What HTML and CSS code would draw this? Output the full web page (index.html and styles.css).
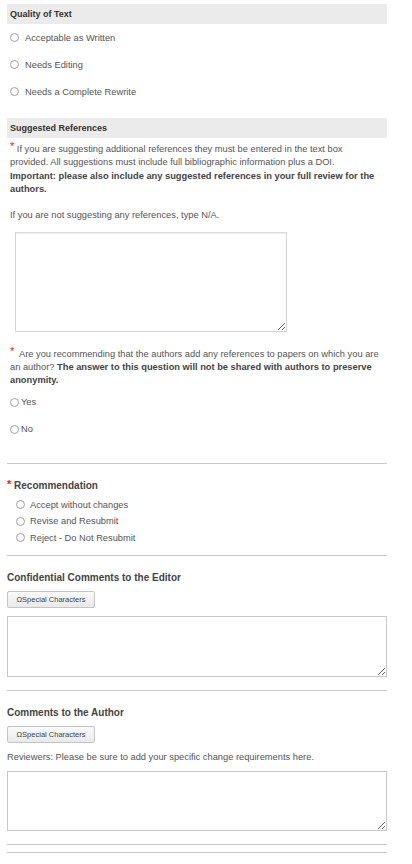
FILE: index.html
```html
<!DOCTYPE html>
<html lang="en">
<head>
  <meta charset="UTF-8">
  <meta name="viewport" content="width=device-width, initial-scale=1.0">
  <title>Review Form</title>
  <link rel="stylesheet" href="styles.css">
</head>
<body>
  <div class="review">
    <!-- quality -->
    <div class="band-title">Quality of Text</div>
    <ul class="choices choices-wide">
      <li><input type="radio" class="radio" name="quality"><label>Acceptable as Written</label></li>
      <li><input type="radio" class="radio" name="quality"><label>Needs Editing</label></li>
      <li><input type="radio" class="radio" name="quality"><label>Needs a Complete Rewrite</label></li>
    </ul>

    <!-- references -->
    <div class="band-title refs-title">Suggested References</div>
    <p class="note first-note"><span class="req">*</span> If you are suggesting additional references they must be entered in the text box<br>
      provided. All suggestions must include full bibliographic information plus a DOI.<br>
      <strong>Important: please also include any suggested references in your full review for the authors.</strong><br><br>
      If you are not suggesting any references, type N/A.</p>
    <textarea class="refs-box"></textarea>

    <p class="note author-note"><span class="req">*</span>&nbsp; Are you recommending that the authors add any references to papers on which you are an author? <strong>The answer to this question will not be shared with authors to preserve anonymity.</strong></p>
    <ul class="choices choices-tight">
      <li><input type="radio" class="radio" name="own"><label>Yes</label></li>
      <li><input type="radio" class="radio" name="own"><label>No</label></li>
    </ul>

    <hr class="rule rule-first">

    <!-- recommendation -->
    <div class="field-title"><span class="req">*</span> Recommendation</div>
    <ul class="choices choices-small">
      <li><input type="radio" class="radio" name="rec"><label>Accept without changes</label></li>
      <li><input type="radio" class="radio" name="rec"><label>Revise and Resubmit</label></li>
      <li><input type="radio" class="radio" name="rec"><label>Reject - Do Not Resubmit</label></li>
    </ul>

    <hr class="rule rule-rec">

    <!-- comments to editor -->
    <div class="field-title">Confidential Comments to the Editor</div>
    <button class="special-btn">&Omega;Special Characters</button>
    <textarea class="comment-box"></textarea>

    <hr class="rule">

    <!-- comments to author -->
    <div class="field-title">Comments to the Author</div>
    <button class="special-btn">&Omega;Special Characters</button>
    <p class="hint">Reviewers: Please be sure to add your specific change requirements here.</p>
    <textarea class="comment-box"></textarea>

    <hr class="rule">
    <hr class="rule rule-last">
  </div>
</body>
</html>
```

FILE: styles.css
```css
body {
  margin: 0;
  font-family: "Liberation Sans", Arial, sans-serif;
  font-size: 9.3px;
  color: #555;
  background-color: #fff;
}

.review {
  width: 380px;
  margin-left: 7px;
  padding-top: 4px;
}

.band-title {
  background-color: #ebebeb;
  height: 20px;
  line-height: 20px;
  padding-left: 3px;
  font-size: 9px;
  font-weight: bold;
  color: #333;
}

.refs-title {
  margin-top: 13px;
}

.choices {
  list-style: none;
  margin: 0;
  padding: 0;
}

.choices li {
  display: flex;
  align-items: center;
}

.radio {
  appearance: none;
  -webkit-appearance: none;
  box-sizing: border-box;
  width: 9px;
  height: 9px;
  margin: 0;
  border: 1px solid #a0a0a0;
  border-radius: 50%;
  background-color: #fff;
}

.choices-wide {
  padding-left: 3px;
}

.choices-wide li {
  height: 27px;
  gap: 6px;
}

.choices-tight {
  padding-left: 3px;
  margin-top: 1px;
}

.choices-tight li {
  height: 27px;
  gap: 2px;
}

.choices-small {
  padding-left: 9px;
  margin-top: 5px;
}

.choices-small li {
  height: 16.5px;
  gap: 5px;
}

.note {
  margin: 0;
  padding-left: 3px;
  line-height: 13.3px;
}

.note strong {
  color: #444;
}

.first-note {
  margin-top: 3px;
}

.req {
  color: #e02020;
  font-size: 11px;
  vertical-align: 2px;
  line-height: 10px;
}

.refs-box {
  display: block;
  box-sizing: border-box;
  width: 272px;
  height: 100px;
  margin: 9px 0 0 8px;
  border: 1px solid #d4d4d4;
  border-top-color: #dcdcdc;
  box-shadow: inset 0 1px 1px #eee;
  padding: 2px;
}

.author-note {
  margin-top: 14px;
}

.rule {
  border: none;
  border-top: 1px solid #c8c8c8;
  margin: 13px 0 0;
  height: 0;
}

.rule-first {
  margin-top: 20px;
}

.rule-rec {
  margin-top: 9px;
}

.rule-last {
  margin-top: 7px;
}

.field-title {
  font-size: 10px;
  font-weight: bold;
  color: #444;
  margin-top: 15px;
  line-height: 13px;
}

.field-title .req {
  vertical-align: 1px;
}

.special-btn {
  display: block;
  box-sizing: border-box;
  width: 88px;
  height: 17px;
  margin-top: 7px;
  padding: 0;
  font-family: "Liberation Sans", Arial, sans-serif;
  font-size: 7.5px;
  color: #444;
  background: linear-gradient(#fafafa, #e9e9e9);
  border: 1px solid #c4c4c4;
  border-radius: 2px;
  cursor: pointer;
}

.comment-box {
  display: block;
  box-sizing: border-box;
  width: 380px;
  height: 61px;
  margin-top: 8px;
  border: 1px solid #c8c8c8;
  padding: 2px;
}

.hint {
  margin: 8px 0 0;
  line-height: 13px;
}

.hint + .comment-box {
  margin-top: 7px;
  height: 60px;
}
```
